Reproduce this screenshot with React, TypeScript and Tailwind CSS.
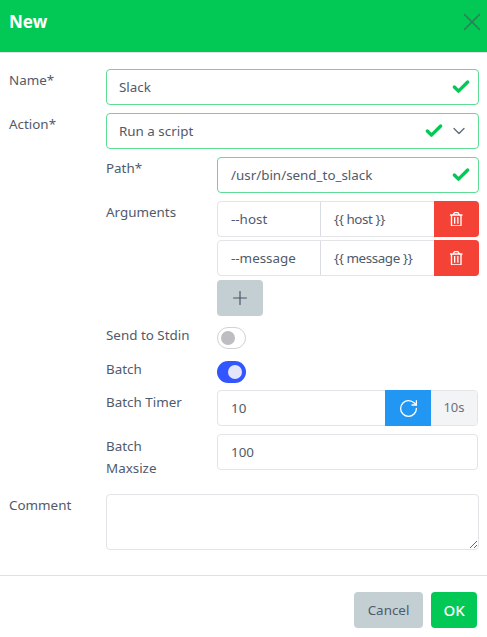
import { ReactNode } from 'react';
import { Check, ChevronDown, Plus, RotateCw, X } from 'lucide-react';
import { FaRegTrashAlt } from 'react-icons/fa';

const inputBase = 'h-9 rounded border bg-white flex items-center text-[13.4px] text-[#505a6b]';

function Valid({ children, className = 'pl-3' }: { children: ReactNode; className?: string }) {
  return (
    <div className={`${inputBase} border-[#5fdc93] justify-between pr-[7px] ${className}`}>
      {children}
    </div>
  );
}

function Tick() {
  return <Check className="h-5 w-5 text-[#02c955]" strokeWidth={4} />;
}

function ArgRow({ name, value }: { name: string; value: string }) {
  return (
    <div className="flex h-9 rounded border border-[#e2e4e8] text-[13.4px] text-[#505a6b]">
      <div className="flex w-[103px] items-center border-r border-[#d9dce1] pl-[13px] pt-px">{name}</div>
      <div className="flex flex-1 items-center pl-[13px] pt-px tracking-[-0.4px]">{value}</div>
      <div className="-my-px -mr-px flex w-[45px] items-center justify-center rounded-r bg-[#f44336]">
        <FaRegTrashAlt className="h-[14.5px] w-[14.5px] text-white" />
      </div>
    </div>
  );
}

function Row({ label, children, className = '' }: { label: ReactNode; children: ReactNode; className?: string }) {
  return (
    <div className={`flex ${className}`}>
      <div className="w-[97px] shrink-0 text-[13.4px] leading-[22px] text-[#505a6b]">{label}</div>
      <div className="min-w-0 flex-1">{children}</div>
    </div>
  );
}

function SubRow({
  label,
  children,
  className = '',
  labelClass = 'leading-[22px]',
}: {
  label: ReactNode;
  children: ReactNode;
  className?: string;
  labelClass?: string;
}) {
  return (
    <div className={`flex ${className}`}>
      <div className={`w-[111px] shrink-0 text-[13.4px] text-[#505a6b] ${labelClass}`}>{label}</div>
      <div className="min-w-0 flex-1">{children}</div>
    </div>
  );
}

export default function App() {
  return (
    <div className="h-[637px] w-[487px] overflow-hidden bg-white font-['Noto_Sans',sans-serif]">
      <header className="flex h-[53px] items-center justify-between border-b border-[#dfe3e6] bg-[#02c955] pb-2 pl-[9px]">
        <h1 className="text-[17px] font-bold text-white">New</h1>
        <X className="h-[30px] w-[30px] text-[#2f7d55]" strokeWidth={1.2} />
      </header>

      <div className="pl-[9px] pr-2 pt-4">
        <Row label="Name*">
          <Valid>
            <span className="pt-px">Slack</span>
            <Tick />
          </Valid>
        </Row>
        <Row label="Action*" className="mt-2">
          <Valid>
            Run a script
            <span className="flex items-center gap-[5px] pr-[2.5px]">
              <Tick />
              <ChevronDown className="h-5 w-5 text-[#5f6b7c]" strokeWidth={1.6} />
            </span>
          </Valid>
        </Row>

        <div className="ml-[97px] mt-2">
          <SubRow label="Path*">
            <Valid className="pl-[13px]">
              /usr/bin/send_to_slack
              <Tick />
            </Valid>
          </SubRow>
          <SubRow label="Arguments" className="mt-2">
            <ArgRow name="--host" value="{{ host }}" />
            <div className="mt-[3px]">
              <ArgRow name="--message" value="{{ message }}" />
            </div>
            <div className="mt-1 flex h-9 w-[46px] items-center justify-center rounded bg-[#c4cfd4]">
              <Plus className="h-[22px] w-[22px] text-[#4a5568]" strokeWidth={1.3} />
            </div>
          </SubRow>
          <SubRow label="Send to Stdin" labelClass="leading-[16px]" className="mt-[11px]">
            <div className="flex h-[22px] w-[29px] items-center rounded-full border border-[#cfd2d6] bg-white pl-[3px]">
              <div className="h-[14px] w-[14px] rounded-full bg-[#bdbdc2]" />
            </div>
          </SubRow>
          <SubRow label="Batch" labelClass="leading-[16px]" className="mt-3">
            <div className="flex h-[22px] w-[29px] items-center justify-end rounded-full bg-[#3355ff] pr-[4px]">
              <div className="h-[14px] w-[14px] rounded-full bg-[#e3e6fb]" />
            </div>
          </SubRow>
          <SubRow label="Batch Timer" labelClass="leading-[24px]" className="mt-[7px]">
            <div className="mr-px flex h-9 rounded border border-[#e2e4e8] text-[13.4px] text-[#505a6b]">
              <div className="flex flex-1 items-center pl-[13px] pt-px">10</div>
              <div className="-my-px flex w-[46px] items-center justify-center bg-[#2196f3]">
                <RotateCw className="h-[21px] w-[21px] text-white" strokeWidth={1.5} />
              </div>
              <div className="flex w-[46px] items-center justify-center rounded-r bg-[#f2f4f6] text-[13px] text-[#6b7280]">10s</div>
            </div>
          </SubRow>
          <SubRow label={<>Batch<br />Maxsize</>} labelClass="leading-[22px] pt-px" className="mt-2">
            <div className={`${inputBase} mr-px border-[#e2e4e8] pl-[13px] pt-px`}>100</div>
          </SubRow>
        </div>

        <Row label="Comment" className="mt-[15px]">
          <textarea className="block h-14 w-full rounded border border-[#e2e4e8] bg-white" />
        </Row>
      </div>

      <footer className="mt-[25px] flex justify-end gap-[8px] border-t border-[#dfe1e4] pr-[10px] pt-4 text-[13.4px]">
        <button className="h-9 w-[69px] rounded bg-[#c4cfd4] text-[#505a6b]">Cancel</button>
        <button className="h-9 w-[46px] rounded bg-[#02c955] text-[15px] font-medium text-white">OK</button>
      </footer>
    </div>
  );
}
